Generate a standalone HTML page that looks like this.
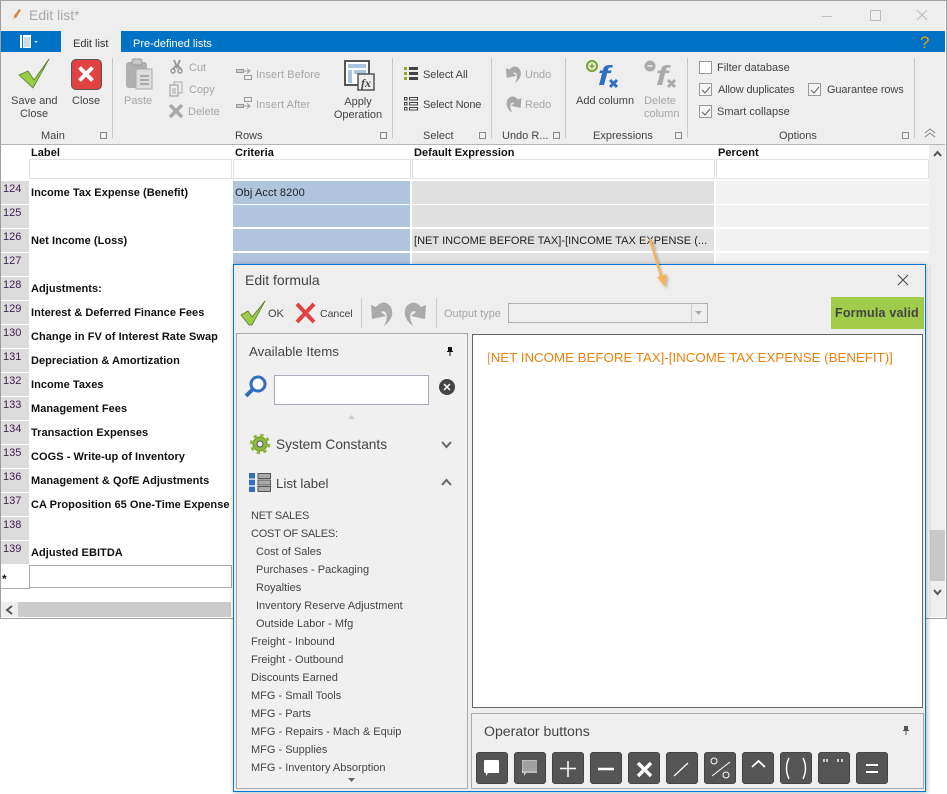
<!DOCTYPE html>
<html><head><meta charset="utf-8"><style>
html,body{margin:0;padding:0;background:#fff}
body{width:947px;height:794px;position:relative;overflow:hidden;font-family:"Liberation Sans",sans-serif;font-size:11px;color:#444}
.a,.t,.g,.b{position:absolute}
.t{white-space:nowrap;line-height:14px}
.d{color:#a6a6a6}
.g{font-weight:bold;color:#111;white-space:nowrap;line-height:14px;letter-spacing:.05px;left:31px}
.h{position:absolute;font-weight:bold;color:#111;line-height:14px;top:146px;letter-spacing:.05px}
.n{position:absolute;left:3px;color:#402050;font-size:11px;line-height:12px}
.c{position:absolute}
.s{position:absolute;width:1px;background:#c8c8c8;top:58px;height:80px}
.cb{position:absolute;width:11px;height:11px;border:1px solid #999;background:#f4f4f4}
.l{position:absolute;white-space:nowrap;line-height:14px;font-size:11px;color:#444}
.o{position:absolute;top:752px;width:30px;height:30px;background:#555;border:1px solid #444;border-radius:3px}
svg{position:absolute;overflow:visible}
</style></head><body>
<!-- main window -->
<div class="a" style="left:0;top:0;width:945px;height:617px;border:1px solid #a0a0a0;border-right:2px solid #a0a0a0;background:#fff"></div>
<div class="a" style="left:1px;top:1px;width:944px;height:30px;background:#eee"></div>
<svg style="left:11px;top:8px" width="12" height="14"><path d="M2 12 L3 8 L8 1 L10 2 L5 10Z" fill="#d9853f"/><path d="M2 12 L3 9 L5 10Z" fill="#f0d8b0"/></svg>
<div class="t" style="left:29px;top:7px;font-size:14px;line-height:17px;color:#a9a9a9">Edit list*</div>
<div class="a" style="left:822px;top:16px;width:10px;height:1px;background:#bbb"></div>
<div class="a" style="left:870px;top:10px;width:9px;height:9px;border:1px solid #bbb"></div>
<svg style="left:917px;top:10px" width="11" height="11"><path d="M0 0L10 10M10 0L0 10" stroke="#bbb" fill="none"/></svg>
<div class="a" style="left:1px;top:31px;width:944px;height:21px;background:#0072c6"></div>
<div class="a" style="left:61px;top:31px;width:60px;height:21px;background:#eee"></div>
<svg style="left:19px;top:35px" width="20" height="14"><path d="M1.500 .5H11.500V12.500H1.500Z" fill="#fff" stroke="#fff"/><path d="M3.500 0V13" stroke="#0072c6"/><path d="M5 3H11M5 5H11M5 7H11M5 9H11M5 11H11" stroke="#7aa8d0" stroke-width=".8"/><path d="M15 6H19L17 8Z" fill="#cde"/></svg>
<div class="t" style="left:73px;top:37px;color:#333">Edit list</div>
<div class="t" style="left:133px;top:37px;color:#fff">Pre-defined lists</div>
<div class="t" style="left:920px;top:34px;color:#e8a010;font-size:17px;line-height:18px">?</div>
<!-- ribbon -->
<div class="a" style="left:1px;top:52px;width:944px;height:92px;background:#eee;border-bottom:1px solid #b5b5b5"></div>
<svg style="left:19px;top:58px" width="31" height="31"><path d="M0 17L9 13L15 22L30 1L14 30Z" fill="#9acb46" stroke="#5c7a2e" stroke-width=".8" stroke-linejoin="round"/></svg>
<div class="t" style="left:11px;top:95px;width:46px;text-align:center;line-height:13px">Save and<br>Close</div>
<div class="a" style="left:71px;top:59px;width:29px;height:29px;background:#e24141;border:1px solid #555;border-radius:5px"></div>
<svg style="left:78px;top:66px" width="16" height="16"><path d="M1.500 1.500L14.500 14.500M14.500 1.500L1.500 14.500" stroke="#fff" stroke-width="4"/></svg>
<div class="t" style="left:72px;top:95px;line-height:13px">Close</div>
<div class="s" style="left:112px"></div>
<svg style="left:125px;top:58px" width="29" height="32"><rect x="1" y="4" width="21" height="26" rx="3" fill="#b0b0b0"/><rect x="7" y="1" width="10" height="6" rx="2" fill="#c8c8c8" stroke="#999"/><path d="M11 11H27V31H11Z" fill="#ddd" stroke="#aaa"/><path d="M15 18H24M15 22H24M15 26H24" stroke="#999" stroke-width="1.500"/></svg>
<div class="t d" style="left:124px;top:95px;line-height:13px">Paste</div>
<svg style="left:170px;top:59px" width="13" height="15"><path d="M4 1L7 8L10 1M6 7L3 10M8 7L11 10" stroke="#999" stroke-width="2" fill="none"/><circle cx="3" cy="12" r="2" fill="none" stroke="#999" stroke-width="1.500"/><circle cx="10" cy="12" r="2" fill="none" stroke="#999" stroke-width="1.500"/></svg>
<div class="t d" style="left:189px;top:61px">Cut</div>
<svg style="left:169px;top:81px" width="14" height="16"><path d="M5 1H13V12H5Z" fill="#eee" stroke="#aaa"/><path d="M1 4H9V15H1Z" fill="#eee" stroke="#999"/><path d="M3 8H7M3 10H7M3 12H7" stroke="#aaa"/></svg>
<div class="t d" style="left:189px;top:83px">Copy</div>
<svg style="left:169px;top:104px" width="14" height="14"><path d="M1 1L13 13M13 1L1 13" stroke="#aaa" stroke-width="3.500"/></svg>
<div class="t d" style="left:188px;top:105px">Delete</div>
<svg style="left:236px;top:67px" width="16" height="14"><rect x=".5" y="2.500" width="7" height="3" fill="#ccc" stroke="#999"/><rect x="8.500" y="8.500" width="7" height="4" fill="#eee" stroke="#999"/><path d="M8 4H13M11 1.500L14 4L11 6.500" stroke="#999" fill="none"/></svg>
<div class="t d" style="left:256px;top:68px;letter-spacing:.1px">Insert Before</div>
<svg style="left:236px;top:97px" width="16" height="14"><rect x="8.500" y=".5" width="7" height="4" fill="#eee" stroke="#999"/><rect x=".5" y="7.500" width="7" height="3" fill="#ccc" stroke="#999"/><path d="M8 9H13M11 6.500L14 9L11 11.500" stroke="#999" fill="none"/></svg>
<div class="t d" style="left:256px;top:98px;letter-spacing:.1px">Insert After</div>
<svg style="left:344px;top:60px" width="31" height="31"><rect x="1" y="1" width="24" height="24" fill="#fff" stroke="#555" stroke-width="2"/><rect x="4" y="4" width="18" height="4" fill="#a8c4e0"/><rect x="4" y="10" width="4" height="13" fill="#a8c4e0"/><rect x="10" y="10" width="12" height="4" fill="#a8c4e0"/><rect x="14" y="14" width="16" height="16" fill="#eee" stroke="#555" stroke-width="1.500"/><text x="17" y="27" font-family="Liberation Serif" font-style="italic" font-weight="bold" font-size="12" fill="#444">fx</text></svg>
<div class="t" style="left:328px;top:96px;width:60px;text-align:center;line-height:13px">Apply<br>Operation</div>
<div class="s" style="left:392px"></div>
<svg style="left:404px;top:67px" width="14" height="14"><path d="M0 0H3V3H0ZM0 5H3V8H0ZM0 10H3V13H0Z" fill="#8aaa30"/><path d="M5 0H14V3H5ZM5 5H14V8H5ZM5 10H14V13H5Z" fill="#444"/></svg>
<div class="t" style="left:423px;top:68px;letter-spacing:-.05px">Select All</div>
<svg style="left:404px;top:97px" width="14" height="14"><path d="M.5 .5H3V3H.5ZM.5 5.500H3V8H.5ZM.5 10.500H3V13H.5ZM5.500 .5H13.500V3H5.500ZM5.500 5.500H13.500V8H5.500ZM5.500 10.500H13.500V13H5.500Z" fill="none" stroke="#444"/></svg>
<div class="t" style="left:423px;top:98px;letter-spacing:-.15px">Select None</div>
<div class="s" style="left:491px"></div>
<svg style="left:506px;top:66px" width="16" height="16"><g transform="scale(.7)"><path d="M0 3L5 5C8 1 12 0 15 1C20 3 22 8 21 13C20 18 16 22 13 24C16 18 17 13 14 10C13 9 11 9 10 10L15 14L1 17Z" fill="#a8a8a8"/></g></svg>
<div class="t d" style="left:525px;top:68px">Undo</div>
<svg style="left:506px;top:96px" width="16" height="16"><g transform="translate(15.400 0) scale(-.7 .7)"><path d="M0 3L5 5C8 1 12 0 15 1C20 3 22 8 21 13C20 18 16 22 13 24C16 18 17 13 14 10C13 9 11 9 10 10L15 14L1 17Z" fill="#a8a8a8"/></g></svg>
<div class="t d" style="left:525px;top:98px">Redo</div>
<div class="s" style="left:565px"></div>
<svg style="left:586px;top:60px" width="34" height="30"><circle cx="6" cy="6" r="5" fill="#eee" stroke="#7aa32a" stroke-width="2"/><path d="M3.500 6H8.500M6 3.500V8.500" stroke="#7aa32a" stroke-width="1.500"/><text x="9" y="25" font-family="Liberation Sans" font-style="italic" font-weight="bold" font-size="28" fill="#2f6fbe" transform="scale(1.300 1)">f</text><path d="M24 20L31 27M31 20L24 27" stroke="#2f6fbe" stroke-width="3"/></svg>
<div class="t" style="left:576px;top:95px;line-height:13px">Add column</div>
<svg style="left:644px;top:60px" width="34" height="30"><circle cx="6" cy="6" r="5.500" fill="#aaa"/><path d="M3.500 6H8.500" stroke="#eee" stroke-width="1.500"/><text x="9" y="25" font-family="Liberation Sans" font-style="italic" font-weight="bold" font-size="28" fill="#aaa" transform="scale(1.300 1)">f</text><path d="M24 20L31 27M31 20L24 27" stroke="#aaa" stroke-width="3"/></svg>
<div class="t d" style="left:644px;top:95px;line-height:13px;width:32px;text-align:center">Delete<br>column</div>
<div class="s" style="left:687px"></div>
<div class="cb" style="left:699px;top:61px;background:#fff"></div>
<div class="t" style="left:717px;top:61px">Filter database</div>
<div class="cb" style="left:699px;top:83px"></div>
<div class="t" style="left:718px;top:83px;letter-spacing:-.15px">Allow duplicates</div>
<div class="cb" style="left:808px;top:83px"></div>
<div class="t" style="left:827px;top:83px;letter-spacing:-.12px">Guarantee rows</div>
<div class="cb" style="left:699px;top:105px"></div>
<div class="t" style="left:717px;top:105px">Smart collapse</div>
<svg style="left:702px;top:87px" width="8" height="7"><path d="M0 3L3 6L8 0" stroke="#666" fill="none"/></svg>
<svg style="left:811px;top:87px" width="8" height="7"><path d="M0 3L3 6L8 0" stroke="#666" fill="none"/></svg>
<svg style="left:702px;top:109px" width="8" height="7"><path d="M0 3L3 6L8 0" stroke="#666" fill="none"/></svg>
<div class="s" style="left:914px"></div>
<svg style="left:925px;top:129px" width="11" height="9"><path d="M0 4L5 0L10 4M0 8L5 4L10 8" stroke="#888" fill="none"/></svg>
<div class="t" style="left:41px;top:129px">Main</div>
<div class="t" style="left:235px;top:129px">Rows</div>
<div class="t" style="left:423px;top:129px">Select</div>
<div class="t" style="left:502px;top:129px">Undo R...</div>
<div class="t" style="left:593px;top:129px">Expressions</div>
<div class="t" style="left:779px;top:129px">Options</div>
<svg style="left:0;top:0;width:947px;height:145px" width="947" height="145"><g fill="none" stroke="#888"><path d="M100.500 132.500h6v6h-6zM380.500 132.500h6v6h-6zM479.500 132.500h6v6h-6zM553.500 132.500h6v6h-6zM675.500 132.500h6v6h-6zM902.500 132.500h6v6h-6z"/></g></svg>
<!-- grid -->
<div class="h" style="left:31px">Label</div>
<div class="h" style="left:235px">Criteria</div>
<div class="h" style="left:414px">Default Expression</div>
<div class="h" style="left:718px">Percent</div>
<div class="c" style="left:29px;top:159px;width:201px;height:18px;border:1px solid #e2e2e2"></div>
<div class="c" style="left:233px;top:159px;width:176px;height:18px;border:1px solid #e2e2e2"></div>
<div class="c" style="left:412px;top:159px;width:301px;height:18px;border:1px solid #e2e2e2"></div>
<div class="c" style="left:716px;top:159px;width:211px;height:18px;border:1px solid #e2e2e2"></div>
<!-- row headers -->
<div class="a" style="left:1px;top:181px;width:28px;height:384px;background:repeating-linear-gradient(#dcdcdc 0,#dcdcdc 23px,#fff 23px,#fff 24px)"></div>
<div class="n" style="top:183px">124</div><div class="n" style="top:207px">125</div><div class="n" style="top:231px">126</div><div class="n" style="top:255px">127</div><div class="n" style="top:279px">128</div><div class="n" style="top:303px">129</div><div class="n" style="top:327px">130</div><div class="n" style="top:351px">131</div><div class="n" style="top:375px">132</div><div class="n" style="top:399px">133</div><div class="n" style="top:423px">134</div><div class="n" style="top:447px">135</div><div class="n" style="top:471px">136</div><div class="n" style="top:495px">137</div><div class="n" style="top:519px">138</div><div class="n" style="top:543px">139</div>
<div class="g" style="top:186px">Income Tax Expense (Benefit)</div>
<div class="g" style="top:234px">Net Income (Loss)</div>
<div class="g" style="top:282px">Adjustments:</div>
<div class="g" style="top:306px">Interest &amp; Deferred Finance Fees</div>
<div class="g" style="top:330px">Change in FV of Interest Rate Swap</div>
<div class="g" style="top:354px">Depreciation &amp; Amortization</div>
<div class="g" style="top:378px">Income Taxes</div>
<div class="g" style="top:402px">Management Fees</div>
<div class="g" style="top:426px">Transaction Expenses</div>
<div class="g" style="top:450px">COGS - Write-up of Inventory</div>
<div class="g" style="top:474px">Management &amp; QofE Adjustments</div>
<div class="g" style="top:498px">CA Proposition 65 One-Time Expense</div>
<div class="g" style="top:546px">Adjusted EBITDA</div>
<!-- criteria etc -->
<div class="c" style="left:233px;top:181px;width:177px;height:23px;background:#b0c4de"></div>
<div class="c" style="left:233px;top:205px;width:177px;height:22px;background:#b0c4de"></div>
<div class="c" style="left:233px;top:229px;width:177px;height:22px;background:#b0c4de"></div>
<div class="c" style="left:233px;top:253px;width:177px;height:12px;background:#b0c4de"></div>
<div class="c" style="left:412px;top:181px;width:302px;height:23px;background:#e0e0e0"></div>
<div class="c" style="left:412px;top:205px;width:302px;height:22px;background:#e0e0e0"></div>
<div class="c" style="left:412px;top:229px;width:302px;height:22px;background:#e0e0e0"></div>
<div class="c" style="left:412px;top:253px;width:302px;height:12px;background:#e0e0e0"></div>
<div class="c" style="left:716px;top:181px;width:213px;height:23px;background:#f2f2f2"></div>
<div class="c" style="left:716px;top:205px;width:213px;height:22px;background:#f2f2f2"></div>
<div class="c" style="left:716px;top:229px;width:213px;height:22px;background:#f2f2f2"></div>
<div class="c" style="left:716px;top:253px;width:213px;height:12px;background:#f2f2f2"></div>
<div class="t" style="left:235px;top:186px;color:#222;letter-spacing:.1px">Obj Acct 8200</div>
<div class="t" style="left:414px;top:234px;color:#222;letter-spacing:.03px">[NET INCOME BEFORE TAX]-[INCOME TAX EXPENSE (...</div>
<!-- new row -->
<div class="a" style="left:1px;top:565px;width:28px;height:23px;background:#fff;border-bottom:1px solid #aaa;border-right:1px solid #aaa"></div>
<div class="t" style="left:2px;top:572px;color:#111;font-weight:bold;font-size:12px">*</div>
<div class="a" style="left:29px;top:565px;width:201px;height:21px;border:1px solid #aaa"></div>
<!-- h scrollbar -->
<div class="a" style="left:1px;top:602px;width:230px;height:15px;background:#cbcbcb"></div>
<div class="a" style="left:1px;top:602px;width:17px;height:15px;background:#eee"></div>
<svg style="left:6px;top:606px" width="7" height="8"><path d="M6 0L1 4L6 8" stroke="#555" stroke-width="2" fill="none"/></svg>
<!-- v scrollbar -->
<div class="a" style="left:929px;top:145px;width:16px;height:472px;background:#eee"></div>
<svg style="left:933px;top:150px" width="9" height="7"><path d="M1 6L4.500 2L8 6" stroke="#555" stroke-width="2" fill="none"/></svg>
<div class="a" style="left:930px;top:530px;width:15px;height:51px;background:#c8c8c8"></div>
<svg style="left:933px;top:589px" width="9" height="7"><path d="M1 1L4.500 5L8 1" stroke="#555" stroke-width="2" fill="none"/></svg>
<!-- dialog -->
<div class="a" style="left:233px;top:264px;width:691px;height:526px;background:#eee;border:1px solid #0078d7;box-shadow:1px 1px 5px rgba(0,0,0,.3)"></div>
<svg style="left:648px;top:238px;filter:drop-shadow(2px 2px 1px rgba(0,0,0,.2))" width="22" height="54"><path d="M2 1L13 38" stroke="#f5b45a" stroke-width="2.500"/><path d="M9 39L19 36L17 49Z" fill="#f5b45a"/></svg>
<div class="t" style="left:245px;top:272px;font-size:14px;line-height:17px;color:#444">Edit formula</div>
<svg style="left:897px;top:274px" width="12" height="12"><path d="M1 1L11 11M11 1L1 11" stroke="#444" fill="none"/></svg>
<svg style="left:241px;top:300px" width="25" height="26"><path d="M0 15L7 11L11 17L24 1L11 25H8Z" fill="#9acb46" stroke="#5c7a2e" stroke-width=".8" stroke-linejoin="round"/></svg>
<div class="t" style="left:268px;top:307px;font-size:11px">OK</div>
<svg style="left:295px;top:302px" width="21" height="22"><path d="M2 2L19 20M19 2L2 20" stroke="#e24141" stroke-width="4"/></svg>
<div class="t" style="left:320px;top:307px;font-size:10.500px">Cancel</div>
<div class="a" style="left:361px;top:298px;width:1px;height:30px;background:#ccc"></div>
<svg style="left:371px;top:302px" width="23" height="24"><path d="M0 3L5 5C8 1 12 0 15 1C20 3 22 8 21 13C20 18 16 22 13 24C16 18 17 13 14 10C13 9 11 9 10 10L15 14L1 17Z" fill="#aaa"/></svg>
<svg style="left:404px;top:302px" width="23" height="24"><g transform="translate(22 0) scale(-1 1)"><path d="M0 3L5 5C8 1 12 0 15 1C20 3 22 8 21 13C20 18 16 22 13 24C16 18 17 13 14 10C13 9 11 9 10 10L15 14L1 17Z" fill="#aaa"/></g></svg>
<div class="a" style="left:436px;top:298px;width:1px;height:30px;background:#ccc"></div>
<div class="t d" style="left:444px;top:307px">Output type</div>
<div class="a" style="left:508px;top:303px;width:198px;height:18px;border:1px solid #b0b0b0"></div>
<div class="a" style="left:691px;top:304px;width:1px;height:18px;background:#ccc"></div>
<svg style="left:695px;top:311px" width="8" height="5"><path d="M0 0H7L3.500 4Z" fill="#aaa"/></svg>
<div class="a" style="left:831px;top:297px;width:93px;height:32px;background:#a0cb4b"></div>
<div class="t" style="left:835px;top:306px;font-weight:bold;font-size:12.500px;letter-spacing:.2px;color:#444">Formula valid</div>
<!-- left panel -->
<div class="a" style="left:236px;top:333px;width:230px;height:454px;border:1px solid #a8a8a8;background:#f0f0f0"></div>
<div class="t" style="left:249px;top:344px;font-size:13.300px;line-height:16px">Available Items</div>
<svg style="left:446px;top:347px" width="8" height="9"><path d="M2 0H6V4H7V5H4.500V9H3.500V5H1V4H2Z" fill="#111"/></svg>
<svg style="left:244px;top:375px" width="24" height="24"><circle cx="14" cy="9" r="7" fill="#fff" stroke="#2f6fbe" stroke-width="3"/><path d="M9 14L2 21" stroke="#2f6fbe" stroke-width="4"/></svg>
<div class="a" style="left:274px;top:375px;width:153px;height:28px;background:#fff;border:1px solid #aab"></div>
<div class="a" style="left:439px;top:379px;width:16px;height:16px;background:#444;border-radius:50%"></div>
<svg style="left:443px;top:383px" width="8" height="8"><path d="M1 1L7 7M7 1L1 7" stroke="#fff" stroke-width="1.500"/></svg>
<svg style="left:348px;top:415px" width="8" height="5"><path d="M0 4H7L3.500 0Z" fill="#ccc"/></svg>
<svg style="left:249px;top:433px" width="22" height="22"><circle cx="11" cy="11" r="7" fill="#8fb83c" stroke="#6a8c2a"/><circle cx="11" cy="11" r="8.500" fill="none" stroke="#8fb83c" stroke-width="3.500" stroke-dasharray="3.200 3.470"/><circle cx="11" cy="11" r="3" fill="#eee" stroke="#556"/></svg>
<div class="t" style="left:276px;top:436px;font-size:13.700px;line-height:17px">System Constants</div>
<svg style="left:441px;top:441px" width="11" height="8"><path d="M1 1L5.500 6L10 1" stroke="#666" stroke-width="2" fill="none"/></svg>
<svg style="left:249px;top:473px" width="22" height="20"><path d="M0 0H6V5.500H0ZM0 6.800H6V12.300H0ZM0 13.600H6V19H0Z" fill="#2f6fbe"/><path d="M9 .5H21.500V5.500H9ZM9 7H21.500V12H9ZM9 13.500H21.500V18.500H9Z" fill="#aaa" stroke="#555"/></svg>
<div class="t" style="left:276px;top:475px;font-size:13.300px;line-height:17px">List label</div>
<svg style="left:441px;top:479px" width="11" height="8"><path d="M1 6L5.500 1L10 6" stroke="#666" stroke-width="2" fill="none"/></svg>
<div class="l" style="left:251px;top:509px;letter-spacing:-.25px">NET SALES</div>
<div class="l" style="left:251px;top:527px;letter-spacing:-.25px">COST OF SALES:</div>
<div class="l" style="left:256px;top:545px">Cost of Sales</div>
<div class="l" style="left:256px;top:563px">Purchases - Packaging</div>
<div class="l" style="left:256px;top:581px">Royalties</div>
<div class="l" style="left:256px;top:599px">Inventory Reserve Adjustment</div>
<div class="l" style="left:256px;top:617px">Outside Labor - Mfg</div>
<div class="l" style="left:251px;top:635px">Freight - Inbound</div>
<div class="l" style="left:251px;top:653px">Freight - Outbound</div>
<div class="l" style="left:251px;top:671px">Discounts Earned</div>
<div class="l" style="left:251px;top:689px">MFG - Small Tools</div>
<div class="l" style="left:251px;top:707px">MFG - Parts</div>
<div class="l" style="left:251px;top:725px">MFG - Repairs - Mach &amp; Equip</div>
<div class="l" style="left:251px;top:743px">MFG - Supplies</div>
<div class="l" style="left:251px;top:761px">MFG - Inventory Absorption</div>
<svg style="left:348px;top:778px" width="8" height="5"><path d="M0 0H7L3.500 4Z" fill="#666"/></svg>
<!-- editor -->
<div class="a" style="left:472px;top:334px;width:449px;height:372px;background:#fff;border:1px solid #666"></div>
<div class="t" style="left:487px;top:349px;font-size:13.300px;line-height:17px;color:#e8820c"><span style="color:#e8a060">[</span>NET INCOME BEFORE TAX]-[INCOME TAX EXPENSE (BENEFIT)]</div>
<!-- operators -->
<div class="a" style="left:471px;top:713px;width:451px;height:74px;border:1px solid #a8a8a8;background:#efefef"></div>
<div class="t" style="left:484px;top:723px;font-size:14.100px;line-height:17px">Operator buttons</div>
<svg style="left:902px;top:726px" width="8" height="9"><path d="M2 0H6V4H7V5H4.500V9H3.500V5H1V4H2Z" fill="#555"/></svg>
<div class="o" style="left:476px"></div><div class="o" style="left:514px"></div><div class="o" style="left:552px"></div><div class="o" style="left:590px"></div><div class="o" style="left:628px"></div><div class="o" style="left:666px"></div><div class="o" style="left:704px"></div><div class="o" style="left:742px"></div><div class="o" style="left:780px"></div><div class="o" style="left:818px"></div><div class="o" style="left:856px"></div>
<svg style="left:476px;top:752px" width="412" height="32">
<path d="M8 9Q8 8 9 8H22Q23 8 23 9V21H12L10 24V21H9Q8 21 8 20Z" fill="#fff"/>
<path d="M46 8H61V21H50L48 24V21H46Z" fill="#ddd"/>
<path d="M46 10H61M46 12H61M46 14H61M46 16H61M46 18H61M48 8V21M50 8V21M52 8V21M54 8V21M56 8V21M58 8V21M60 8V21" stroke="#555" stroke-width=".5"/>
<path d="M92 9V25M84 16.500H100" stroke="#fff" stroke-width="1.500"/>
<path d="M122 17H138" stroke="#fff" stroke-width="2.500"/>
<path d="M162 11L175 24M175 11L162 24" stroke="#fff" stroke-width="3.500"/>
<path d="M198 24L212 11" stroke="#fff" stroke-width="1.200"/>
<path d="M236 24L254 10" stroke="#fff" stroke-width="1"/>
<circle cx="238" cy="9" r="3" fill="none" stroke="#fff"/><circle cx="250" cy="23" r="3" fill="none" stroke="#fff"/>
<path d="M276 15L282.500 9L289 15" stroke="#fff" stroke-width="1.800" fill="none"/>
<path d="M313 6Q308 16 313 27M327 6Q332 16 327 27" stroke="#fff" stroke-width="1.400" fill="none"/>
<path d="M348 7V10M351 7V10M362 7V10M366 7V10" stroke="#fff" stroke-width="1.400"/>
<path d="M390 13H402M390 20H402" stroke="#fff" stroke-width="2"/>
</svg>
</body></html>
